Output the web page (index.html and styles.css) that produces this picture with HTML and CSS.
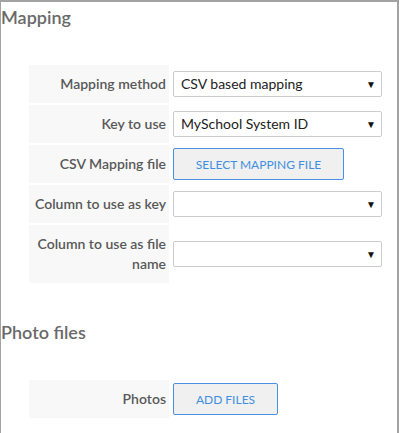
FILE: index.html
```html
<!DOCTYPE html>
<html>
<head>
  <title>Photo import</title>
  <link rel="stylesheet" href="styles.css">
</head>
<body>
  <div class="panel">
    <h2 class="section-title">Mapping</h2>
    <div class="form-grid">
      <div class="form-row">
        <div class="form-label">Mapping method</div>
        <div class="form-control">
          <div class="select-box">CSV based mapping<span class="caret">&#9660;</span></div>
        </div>
      </div>
      <div class="form-row">
        <div class="form-label">Key to use</div>
        <div class="form-control">
          <div class="select-box">MySchool System ID<span class="caret">&#9660;</span></div>
        </div>
      </div>
      <div class="form-row">
        <div class="form-label">CSV Mapping file</div>
        <div class="form-control">
          <button class="file-button wide">Select mapping file</button>
        </div>
      </div>
      <div class="form-row">
        <div class="form-label">Column to use as key</div>
        <div class="form-control">
          <div class="select-box"><span class="caret">&#9660;</span></div>
        </div>
      </div>
      <div class="form-row">
        <div class="form-label">Column to use as file name</div>
        <div class="form-control">
          <div class="select-box"><span class="caret">&#9660;</span></div>
        </div>
      </div>
    </div>

    <h2 class="section-title photos-title">Photo files</h2>
    <div class="form-grid">
      <div class="form-row">
        <div class="form-label">Photos</div>
        <div class="form-control">
          <button class="file-button">Add files</button>
        </div>
      </div>
    </div>
  </div>
</body>
</html>
```

FILE: styles.css
```css
html, body {
  margin: 0;
  padding: 0;
}

body {
  font-family: Lato, "Liberation Sans", sans-serif;
  color: #555;
}

.panel {
  width: 396px;
  height: 431px;
  border: 2px solid #a3a3a3;
  border-left-width: 1px;
  background: #fff;
  overflow: hidden;
}

.section-title {
  margin: 4px 0 0 0;
  font-size: 18px;
  font-weight: 600;
  color: #6a6a6a;
  line-height: 22px;
}

.photos-title {
  margin-top: 38px;
}

.form-grid {
  margin: 37px 0 0 28px;
  display: flex;
  flex-direction: column;
  gap: 2px;
}

.form-row {
  display: flex;
  align-items: stretch;
}

.form-label {
  width: 137px;
  padding: 9px 3px 9px 0;
  background: #f8f8f8;
  text-align: right;
  font-size: 14px;
  font-weight: 600;
  line-height: 20px;
  color: #585858;
}

.form-control {
  margin-left: 4px;
  display: flex;
  align-items: center;
}

.select-box {
  position: relative;
  width: 200px;
  height: 24px;
  border: 1px solid #ccc;
  border-radius: 2px;
  background: #fff;
  padding-left: 7px;
  font-size: 14px;
  line-height: 24px;
  color: #222;
}

.caret {
  position: absolute;
  right: 5px;
  top: 0;
  font-size: 10px;
  color: #111;
}

.file-button {
  height: 32px;
  padding: 0;
  border: 1px solid #4a90e2;
  border-radius: 2px;
  background: #f0f0f0;
  font-family: Lato, "Liberation Sans", sans-serif;
  font-size: 12px;
  text-transform: uppercase;
  color: #3f8fe0;
  cursor: pointer;
}

.file-button.wide {
  width: 171px;
}

.file-button:not(.wide) {
  width: 105px;
}
```
